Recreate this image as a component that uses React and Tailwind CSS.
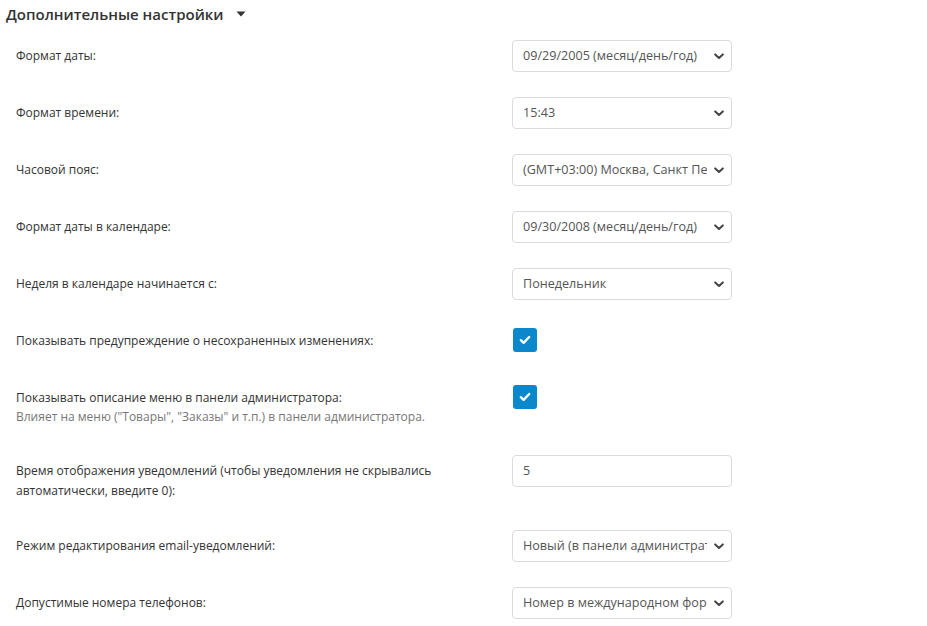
import React from "react";

const Chevron = () => (
  <svg width="10" height="7" viewBox="0 0 10 7" className="shrink-0">
    <path d="M1.2 1.4 L5 5 L8.8 1.4" fill="none" stroke="#444" strokeWidth="2" strokeLinecap="round" strokeLinejoin="round" />
  </svg>
);

const Select = ({ value }) => (
  <div className="flex h-[32px] w-[220px] items-center rounded-[4px] border border-[#d9dcdf] bg-white pl-[10px] pr-[7px]">
    <span className="flex-1 overflow-hidden whitespace-nowrap text-[12.6px] text-[#555]">{value}</span>
    <span className="ml-[7px] flex w-[10px] justify-center"><Chevron /></span>
  </div>
);

const Check = () => (
  <div className="ml-[1px] mt-[3px] flex h-[24px] w-[24px] items-center justify-center rounded-[3px] bg-[#0b87cc]">
    <svg width="12" height="10" viewBox="0 0 12 10">
      <path d="M1.8 5.2 L4.6 7.8 L10.2 2" fill="none" stroke="#fff" strokeWidth="2.4" strokeLinecap="round" strokeLinejoin="round" />
    </svg>
  </div>
);

const Row = ({ label, desc, children, mb = "mb-[25px]" }) => (
  <div className={`flex ${mb}`}>
    <div className="w-[512px] shrink-0 pl-[16px] pr-[40px] pt-[6px] pb-[6px]">
      <div className="text-[12px] leading-[20px] text-[#333]">{label}</div>
      {desc && <div className="text-[12px] leading-[17px] text-[#777]">{desc}</div>}
    </div>
    <div className="min-h-[32px]">{children}</div>
  </div>
);

export default function App() {
  return (
    <div className="min-h-[626px] w-[927px] bg-white" style={{ fontFamily: '"Open Sans", "Liberation Sans", sans-serif' }}>
      <div className="flex h-[26px] items-center pl-[6px] pt-[2px]">
        <span className="text-[15px] font-semibold leading-[24px] text-[#333]">Дополнительные настройки</span>
        <svg width="10" height="6" viewBox="0 0 10 6" className="ml-[12px]">
          <path d="M0.5 0.5 L9.5 0.5 L5 5.5 Z" fill="#333" />
        </svg>
      </div>
      <div className="pt-[14px]">
        <Row label="Формат даты:"><Select value="09/29/2005 (месяц/день/год)" /></Row>
        <Row label="Формат времени:"><Select value="15:43" /></Row>
        <Row label="Часовой пояс:"><Select value="(GMT+03:00) Москва, Санкт Петербург, Волгоград" /></Row>
        <Row label="Формат даты в календаре:"><Select value="09/30/2008 (месяц/день/год)" /></Row>
        <Row label="Неделя в календаре начинается с:"><Select value="Понедельник" /></Row>
        <Row label="Показывать предупреждение о несохраненных изменениях:"><Check /></Row>
        <Row label="Показывать описание меню в панели администратора:" desc={'Влияет на меню ("Товары", "Заказы" и т.п.) в панели администратора.'} mb="mb-[24px]"><Check /></Row>
        <Row label="Время отображения уведомлений (чтобы уведомления не скрывались автоматически, введите 0):" mb="mb-[23px]">
          <div className="flex h-[32px] w-[220px] items-center rounded-[4px] border border-[#d9dcdf] bg-white pl-[10px] text-[12.6px] text-[#555]">5</div>
        </Row>
        <Row label="Режим редактирования email-уведомлений:"><Select value="Новый (в панели администратора)" /></Row>
        <Row label="Допустимые номера телефонов:"><Select value="Номер в международном формате" /></Row>
      </div>
    </div>
  );
}
